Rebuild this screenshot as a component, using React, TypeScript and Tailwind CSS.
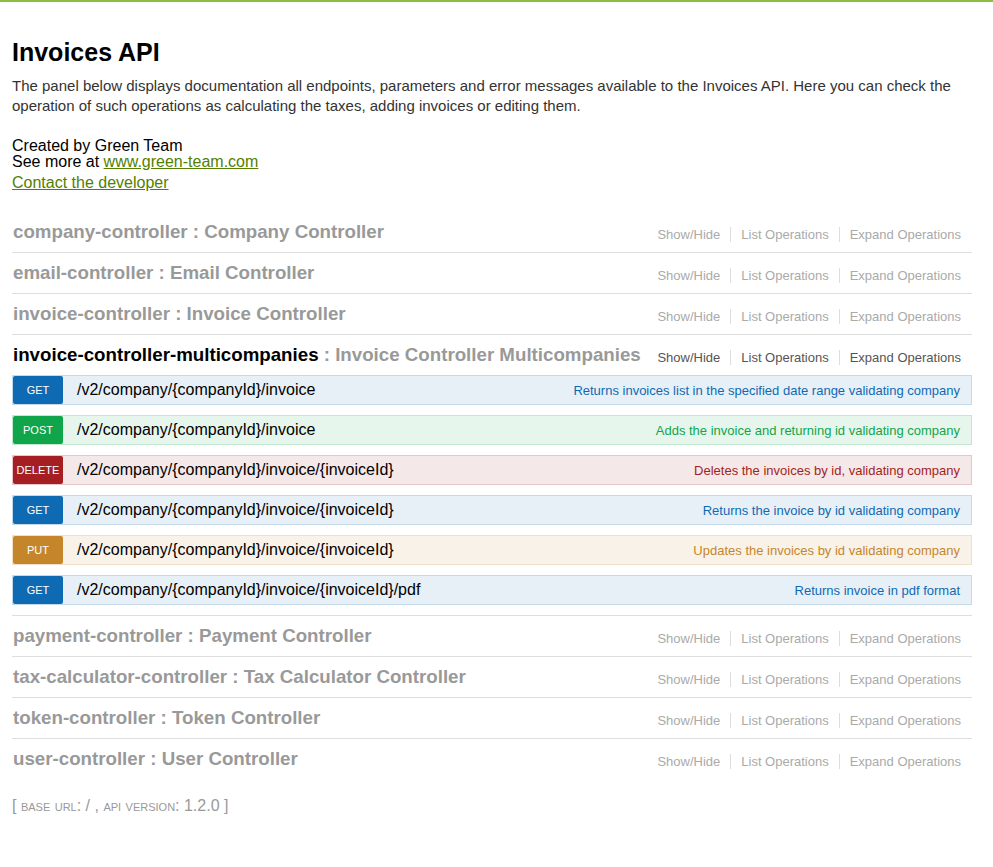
type Method = "GET" | "POST" | "DELETE" | "PUT";

interface Operation {
  method: Method;
  path: string;
  summary: string;
}

const resources = [
  { name: "company-controller", desc: "Company Controller" },
  { name: "email-controller", desc: "Email Controller" },
  { name: "invoice-controller", desc: "Invoice Controller" },
  { name: "invoice-controller-multicompanies", desc: "Invoice Controller Multicompanies", active: true },
  { name: "payment-controller", desc: "Payment Controller" },
  { name: "tax-calculator-controller", desc: "Tax Calculator Controller" },
  { name: "token-controller", desc: "Token Controller" },
  { name: "user-controller", desc: "User Controller" },
];

const operations: Operation[] = [
  {
    method: "GET",
    path: "/v2/company/{companyId}/invoice",
    summary: "Returns invoices list in the specified date range validating company",
  },
  {
    method: "POST",
    path: "/v2/company/{companyId}/invoice",
    summary: "Adds the invoice and returning id validating company",
  },
  {
    method: "DELETE",
    path: "/v2/company/{companyId}/invoice/{invoiceId}",
    summary: "Deletes the invoices by id, validating company",
  },
  {
    method: "GET",
    path: "/v2/company/{companyId}/invoice/{invoiceId}",
    summary: "Returns the invoice by id validating company",
  },
  {
    method: "PUT",
    path: "/v2/company/{companyId}/invoice/{invoiceId}",
    summary: "Updates the invoices by id validating company",
  },
  {
    method: "GET",
    path: "/v2/company/{companyId}/invoice/{invoiceId}/pdf",
    summary: "Returns invoice in pdf format",
  },
];

const methodStyles: Record<Method, { row: string; badge: string; text: string }> = {
  GET: { row: "bg-[#e7f0f7] border-[#c3d9ec]", badge: "bg-[#0f6ab4]", text: "text-[#0f6ab4]" },
  POST: { row: "bg-[#e7f6ec] border-[#c3e8d1]", badge: "bg-[#10a54a]", text: "text-[#10a54a]" },
  DELETE: { row: "bg-[#f5e8e8] border-[#e8c6c7]", badge: "bg-[#a41e22]", text: "text-[#a41e22]" },
  PUT: { row: "bg-[#f9f2e9] border-[#f0e0ca]", badge: "bg-[#c5862b]", text: "text-[#c5862b]" },
};

function Options({ active }: { active?: boolean }) {
  const color = active ? "text-[#555]" : "text-[#aaa]";
  return (
    <ul className={`mt-[4px] flex text-[13px] leading-[15px] ${color}`}>
      <li className="border-r border-[#ddd] px-[10px]">Show/Hide</li>
      <li className="border-r border-[#ddd] px-[10px]">List Operations</li>
      <li className="pl-[10px]">Expand Operations</li>
    </ul>
  );
}

function OperationRow({ op }: { op: Operation }) {
  const s = methodStyles[op.method];
  return (
    <div className={`mb-[10px] flex h-[30px] items-center border ${s.row}`}>
      <span
        className={`flex h-[28px] w-[50px] shrink-0 items-center justify-center rounded-[2px] text-[11px] text-white ${s.badge}`}
      >
        {op.method}
      </span>
      <span className="pl-[14px] text-[16px] text-black">{op.path}</span>
      <span className={`ml-auto pr-[11px] text-[13px] ${s.text}`}>{op.summary}</span>
    </div>
  );
}

export default function App() {
  return (
    <div className="min-h-screen border-t-2 border-[#8abf40] bg-white font-['Liberation_Sans',Arial,sans-serif] leading-none">
      <div className="ml-3 w-[960px]">
        {/* Info */}
        <h1 className="mt-[38px] text-[25px] font-bold leading-[25px] text-black">Invoices API</h1>
        <p className="mt-[11px] text-[15px] leading-[20px] text-[#333]">
          The panel below displays documentation all endpoints, parameters and error messages available to the
          Invoices API. Here you can check the operation of such operations as calculating the taxes, adding invoices
          or editing them.
        </p>
        <div className="mt-[22px] text-[16px] leading-[16px] text-black">
          <div>Created by Green Team</div>
          <div>
            See more at{" "}
            <a href="#" className="text-[#547f00] underline">
              www.green-team.com
            </a>
          </div>
          <a href="#" className="mt-[5px] inline-block text-[#547f00] underline">
            Contact the developer
          </a>
        </div>

        {/* Resources */}
        <ul className="mt-[21px]">
          {resources.map((r) => (
            <li key={r.name} className="border-b border-[#ddd] last:border-b-0">
              <div className="flex h-10 items-center justify-between pr-[11px]">
                <h2 className="pl-px text-[18.72px] font-bold text-[#999]">
                  <span className={r.active ? "text-black" : ""}>{r.name}</span> : {r.desc}
                </h2>
                <Options active={r.active} />
              </div>
              {r.active && (
                <div>
                  {operations.map((op, i) => (
                    <OperationRow key={i} op={op} />
                  ))}
                </div>
              )}
            </li>
          ))}
        </ul>

        {/* Footer */}
        <h4 className="mt-[19px] text-[16px] text-[#999]">
          [ <span className="[font-variant:small-caps]">base url</span>: / ,{" "}
          <span className="[font-variant:small-caps]">api version</span>: 1.2.0 ]
        </h4>
      </div>
    </div>
  );
}
